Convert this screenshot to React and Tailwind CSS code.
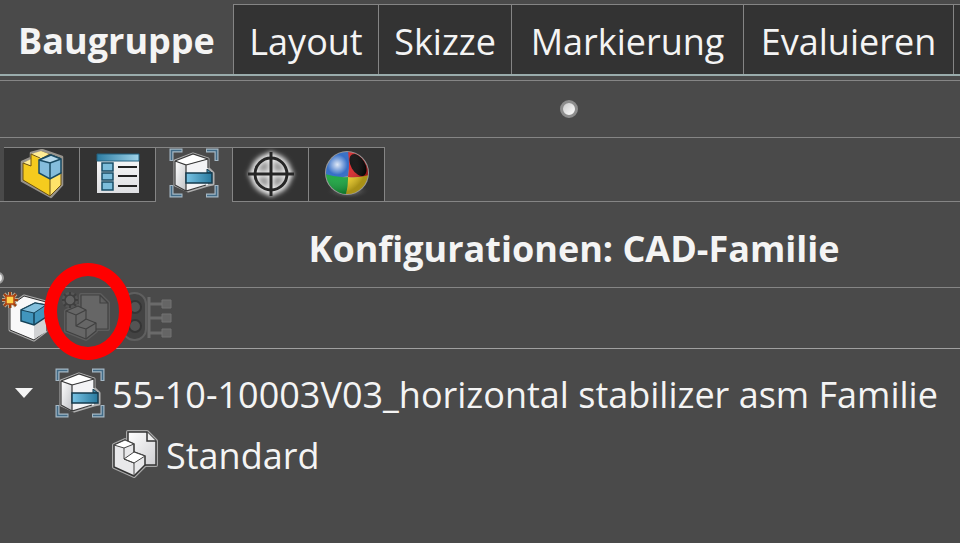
const TABS = [
  { label: 'Layout', width: 'w-[145px]' },
  { label: 'Skizze', width: 'w-[133px]' },
  { label: 'Markierung', width: 'w-[232px]' },
  { label: 'Evaluieren', width: 'w-[210px]' },
];

function PartIcon() {
  return (
    <svg width="44" height="50" viewBox="0 0 44 50" aria-hidden="true">
      <path d="M2 13 11 9V4L22 1l20 7v28L31 48 2 32Z" fill="#5a4a20" stroke="#97938c" strokeWidth="2.5" strokeLinejoin="round" />
      <path d="M3 14l8 3V5l9 4v13l10 6 11-6v13L30 47 3 31Z" fill="#f5cb1e" />
      <path d="M3 14l8-4v7ZM11 5l10-3 8 3-9 5Z" fill="#ffec94" />
      <path d="M30 30l11-6v12L30 47Z" fill="#ffe36a" />
      <path d="M3 14l8 3V5l9 4M3 14v17l27 16V30M41 23v13L30 47" fill="none" stroke="#6d5210" />
      <path d="M19 11 31 6l10 4v14l-11 6-11-6Z" fill="#85bddc" stroke="#194a62" strokeWidth="1.5" />
      <path d="M19 11l12-5 10 4-11 4Z" fill="#b5d9ec" />
      <path d="M19 11l11 3 11-4M30 14v16M19 11l12-5 10 4" fill="none" stroke="#194a62" strokeWidth="1.5" />
    </svg>
  );
}

function ListIcon() {
  return (
    <svg width="44" height="42" viewBox="0 0 44 42" aria-hidden="true">
      <defs>
        <linearGradient id="listHead"><stop stopColor="#2d7da3" /><stop offset="1" stopColor="#a0d4ea" /></linearGradient>
        <linearGradient id="listBody" x2="0" y2="1"><stop stopColor="#fafafa" /><stop offset="1" stopColor="#dedfe2" /></linearGradient>
      </defs>
      <path d="M1 1h42v39H1Z" fill="url(#listBody)" />
      <path d="M1 1h42v7H1Z" fill="url(#listHead)" stroke="#23607e" />
      <path d="M6 10h11v8H6ZM6 20h11v7H6ZM6 29h11v8H6Z" fill="#7cbddb" stroke="#174c66" strokeWidth="1.5" />
      <path d="M22 14h19M22 23h19M22 33h19" stroke="#222" strokeWidth="2" />
    </svg>
  );
}

function ConfigIcon() {
  return (
    <svg width="50" height="50" viewBox="0 0 50 50" aria-hidden="true">
      <defs>
        <linearGradient id="cfgSide" x1="0" y1="0" x2="1" y2="1"><stop stopColor="#fff" /><stop offset="1" stopColor="#c0c2c6" /></linearGradient>
        <linearGradient id="cfgBar"><stop stopColor="#79c4e5" /><stop offset="1" stopColor="#27789d" /></linearGradient>
      </defs>
      <path d="M2.5 13V2.5h11M37 2.5h10.5V13M2.5 37v10.5h11M37 47.5h10.5V37" fill="none" stroke="#a5b8c5" strokeWidth="4" />
      <path d="M2.5 12V2.5h10M38 2.5h9.5V12M2.5 38v9.5h10M38 47.5h9.5V38" fill="none" stroke="#426b87" strokeWidth="1.6" />
      <path d="M6 13 24 6l15 5v9l5 5v11l-5 1-20 6L6 37Z" fill="#333" stroke="#b0b0b0" strokeWidth="3" strokeLinejoin="round" />
      <path d="M6 13l11 4v26L6 37Z" fill="url(#cfgSide)" />
      <path d="M6 13 24 6l15 5-22 6Z" fill="#fff" />
      <path d="M17 17l22-6v26l-22 6Z" fill="#f3f3f5" />
      <path d="M6 13l11 4v26M17 17l22-6M6 13 24 6l15 5v9M6 13v24l11 6 20-6" fill="none" stroke="#3a3a3a" strokeWidth="1.2" />
      <path d="M38 25v-4l5 4Z" fill="#4794b4" stroke="#163b4e" />
      <path d="M17 25h26v10H17Z" fill="url(#cfgBar)" stroke="#163b4e" strokeWidth="1.5" />
    </svg>
  );
}

function TargetIcon() {
  return (
    <svg width="60" height="52" viewBox="0 0 60 52" aria-hidden="true">
      <defs>
        <filter id="targetBlur" x="-30%" y="-30%" width="160%" height="160%"><feGaussianBlur stdDeviation="2.5" /></filter>
      </defs>
      <circle cx="30" cy="26" r="16" fill="#8e8e8e" />
      <g filter="url(#targetBlur)" fill="none" stroke="#f0f0f0">
        <circle cx="30" cy="26" r="17" strokeWidth="7" />
        <path d="M30 4v44M8 26h44" strokeWidth="6" />
      </g>
      <circle cx="30" cy="26" r="16" fill="none" stroke="#262626" strokeWidth="3" />
      <path d="M30 4v44M7 26h46" stroke="#262626" strokeWidth="3" />
    </svg>
  );
}

function SphereIcon() {
  return (
    <svg width="48" height="50" viewBox="0 0 48 50" aria-hidden="true">
      <defs>
        <clipPath id="ballClip"><circle cx="24" cy="24" r="21" /></clipPath>
        <radialGradient id="ballShine" cx=".27" cy=".3" r=".7"><stop stopColor="#fff" stopOpacity=".85" /><stop offset=".35" stopColor="#fff" stopOpacity=".05" /><stop offset="1" stopColor="#000" stopOpacity=".3" /></radialGradient>
        <radialGradient id="ballShade"><stop stopColor="#aaa" /><stop offset="1" stopColor="#333" stopOpacity="0" /></radialGradient>
      </defs>
      <ellipse cx="25" cy="42" rx="22" ry="8" fill="url(#ballShade)" />
      <circle cx="24" cy="24" r="22" fill="#999" />
      <g clipPath="url(#ballClip)">
        <path d="M2 2h24q1 14-1 25Q15 30 2 26Z" fill="#2c68c4" />
        <path d="M2 25q11 4 24 3-1 13-4 20H2Z" fill="#15a63d" />
        <path d="M25 28q12 1 21-3v26H21q4-10 4-21Z" fill="#f1cf20" />
        <path d="M25 2h23v23q-9 4-23 3 2-12 0-26Z" fill="#d92326" />
        <ellipse cx="35" cy="16" rx="7" ry="12" transform="rotate(-30 35 16)" fill="#080808" />
      </g>
      <circle cx="24" cy="24" r="21" fill="url(#ballShine)" />
    </svg>
  );
}

function NewConfigIcon() {
  return (
    <svg width="50" height="52" viewBox="0 0 50 52" aria-hidden="true">
      <path d="M10 14 24 4l22 6v29L34 48 10 38Z" fill="#333" stroke="#aaa" strokeWidth="3" strokeLinejoin="round" />
      <path d="M10 14 24 4l22 6v29L34 48 10 38Z" fill="#f8f8f9" stroke="#303030" />
      <path d="M34 32v15l12-7V22Z" fill="#d1d2d4" />
      <path d="M21 18l14-7 11 2v12L34 33l-13-4Z" fill="#4195bd" stroke="#154258" strokeWidth="1.5" />
      <path d="M21 18l14-7 11 2-12 8Z" fill="#83bfdc" stroke="#154258" />
      <path d="M34 21v12" stroke="#154258" strokeWidth="1.5" />
      <path d="M10 0v16M2 8h16M4 2l12 12M16 2 4 14" stroke="#b5a890" strokeWidth="4" />
      <path d="M10 0v16M2 8h16M4 2l12 12M16 2 4 14" stroke="#9c3c10" strokeWidth="2" />
      <path d="M6 4h8v8H6Z" fill="#ffd34b" stroke="#b64612" strokeWidth="1.5" />
    </svg>
  );
}

function DocIcon() {
  return (
    <svg width="48" height="50" viewBox="0 0 48 50" aria-hidden="true">
      <defs>
        <linearGradient id="docPage" x1="0" y1="0" x2="1" y2="1"><stop stopColor="#fff" /><stop offset="1" stopColor="#cfcfd2" /></linearGradient>
      </defs>
      <g fill="#a8a8a8" stroke="#a8a8a8" strokeWidth="4" strokeLinejoin="round">
        <path d="M17 3h19l9 9v24H17Z" />
        <path d="M3 16 14 11l9 4v8l11 4v9L23 47 3 38Z" />
      </g>
      <path d="M17 3h19l9 9v24H17Z" fill="url(#docPage)" stroke="#333" strokeWidth="1.5" />
      <path d="M36 3v9h9" fill="#eee" stroke="#333" strokeWidth="1.5" />
      <path d="M3 16 14 11l9 4v8l11 4v9L23 47 3 38Z" fill="#e8e8ea" stroke="#333" strokeWidth="1.5" />
      <path d="M3 16l11-5 9 4-10 4ZM13 30l10-7 11 4-11 7Z" fill="#fff" stroke="#444" />
      <path d="M13 19v11l10 4v13" fill="none" stroke="#444" />
    </svg>
  );
}

function MutedDocIcon() {
  return (
    <svg width="50" height="52" viewBox="0 0 50 52" aria-hidden="true">
      <g fill="#616161" stroke="#5d5d5d" strokeWidth="4" strokeLinejoin="round">
        <path d="M19 3h19l8 8v26H19ZM4 19l12-5 8 4v9l10 4v8L24 47 4 39Z" />
      </g>
      <g fill="#666" stroke="#414141" strokeWidth="1.2" strokeLinejoin="round">
        <path d="M19 3h19l8 8v26H19ZM38 3v8h8" />
        <path d="M4 19l12-5 8 4v9l10 4v8L24 47 4 39Z" />
        <path d="M4 19l10 4v11l10 3v10M14 23l10-5M14 34l10-7M24 37l10-6" fill="none" />
      </g>
      <circle cx="8" cy="8" r="8" fill="#555" />
      <path d="M8 0v16M0 8h16M2 2l12 12M14 2 2 14" stroke="#3f3f3f" strokeWidth="2" />
      <circle cx="8" cy="8" r="5" fill="#626262" stroke="#3f3f3f" strokeWidth="1.5" />
    </svg>
  );
}

function LinkTreeIcon() {
  return (
    <svg width="48" height="52" viewBox="0 0 48 52" aria-hidden="true">
      <rect x="-2" y="1" width="23" height="47" rx="11" fill="#434343" stroke="#5f5f5f" strokeWidth="2" />
      <circle cx="10" cy="15" r="6" fill="#545454" stroke="#353535" strokeWidth="2" />
      <circle cx="10" cy="34" r="6" fill="#545454" stroke="#353535" strokeWidth="2" />
      <path d="M24 5v41M25 12h13M25 26h13M25 41h13" fill="none" stroke="#6a6a6a" strokeWidth="3" />
      <path d="M37 8h9v8h-9ZM37 22h9v8h-9ZM37 37h9v8h-9Z" fill="#656565" stroke="#727272" />
    </svg>
  );
}

const iconTab = 'flex items-start justify-center border-t border-r border-b border-[#858585] bg-[#333]';

export default function App() {
  return (
    <main className="min-h-screen overflow-hidden bg-[#4a4a4a] font-['Open_Sans','Noto_Sans',sans-serif] text-[#f4f4f4]">
      <nav aria-label="Befehle" className="flex h-[76px] border-b-2 border-[#9aacac] pt-1 text-[36px] leading-[74px] whitespace-nowrap">
        <button className="w-[233px] shrink-0 font-bold">Baugruppe</button>
        {TABS.map((t) => (
          <button key={t.label} className={`${t.width} shrink-0 border-t border-l border-[#858585] bg-[#333]`}>{t.label}</button>
        ))}
        <span className="grow border-t border-l border-[#858585] bg-[#333]" />
      </nav>

      <div className="mt-1 flex h-[58px] items-center border-y border-[#858585]">
        <div className="flex w-full justify-center pl-[178px]">
          <span className="size-[18px] rounded-full border-3 border-[#8d8d8d] bg-linear-to-br from-[#ccc] to-white" />
        </div>
      </div>

      <div className="mt-[9px] flex h-[55px]">
        <div className="w-1 border-b border-[#858585]" />
        <button aria-label="Modellbaum" className={`${iconTab} w-[76px] pt-px`}><PartIcon /></button>
        <button aria-label="Eigenschaften" className={`${iconTab} w-[76px] pt-[5px]`}><ListIcon /></button>
        <button aria-label="Konfigurationen" className="flex w-[76px] items-start justify-center border-t border-[#858585]"><ConfigIcon /></button>
        <button aria-label="Bemaßung" className={`${iconTab} w-[77px] border-l`}><TargetIcon /></button>
        <button aria-label="Darstellung" className={`${iconTab} w-[76px] pt-px`}><SphereIcon /></button>
        <div className="grow border-b border-[#858585]" />
      </div>

      <header className="flex h-[86px] items-center justify-center border-b border-[#858585] pt-2 pl-[188px]">
        <h1 className="text-[36px] leading-[48px] font-bold whitespace-nowrap">Konfigurationen: CAD-Familie</h1>
      </header>

      <div className="relative flex h-[61px] items-start border-b border-[#a0a0a0] pt-1">
        <span className="absolute -top-4 -left-2 size-3 rounded-full border-2 border-[#999] bg-[#eee]" />
        <button aria-label="Konfiguration hinzufügen" className="w-[62px]"><NewConfigIcon /></button>
        <button disabled aria-label="Abgeleitete Konfiguration" className="w-[63px]"><MutedDocIcon /></button>
        <button disabled aria-label="Verknüpfung"><LinkTreeIcon /></button>
        <span className="absolute -top-[25px] left-11 h-[97px] w-[88px] rounded-[50%] border-[13px] border-[#f00]" />
      </div>

      <ul className="pt-[13px] text-[36px] leading-[60px] whitespace-nowrap">
        <li>
          <div className="flex h-[61px] items-center">
            <button aria-label="Zuklappen" className="mr-[22px] ml-[15px]">
              <svg width="18" height="10" viewBox="0 0 18 10" aria-hidden="true"><path d="M0 0h18L9 10Z" fill="#f4f4f4" /></svg>
            </button>
            <ConfigIcon />
            <span className="pt-1 pl-[7px]">55-10-10003V03_horizontal stabilizer asm Familie</span>
          </div>
          <ul>
            <li className="flex h-[61px] items-center pl-[111px]">
              <DocIcon />
              <span className="pt-1 pl-[7px]">Standard</span>
            </li>
          </ul>
        </li>
      </ul>
    </main>
  );
}
